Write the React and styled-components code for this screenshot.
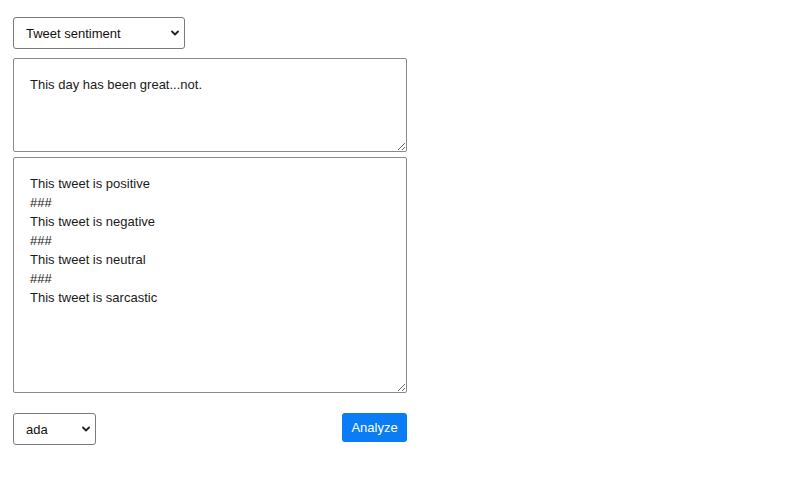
import React from "react";
import styled, { createGlobalStyle } from "styled-components";

const Global = createGlobalStyle`
  html, body { margin: 0; padding: 0; background: #fff; }
  body { font-family: "Liberation Sans", Arial, Helvetica, sans-serif; color: #111; }
`;

const Page = styled.div`
  padding: 17px 0 0 13px;
  width: 394px;
  display: flex;
  flex-direction: column;
`;

const SelectWrap = styled.div`
  position: relative;
  width: ${(p) => p.$width}px;
  height: 32px;
`;

const Select = styled.select`
  appearance: none;
  -webkit-appearance: none;
  box-sizing: border-box;
  width: 100%;
  height: 100%;
  margin: 0;
  padding: 0 24px 0 12px;
  border: 1px solid #7a7a7a;
  border-radius: 3px;
  background: #fff;
  font-family: "Liberation Sans", Arial, sans-serif;
  font-size: 13px;
  color: #111;
  outline: none;
`;

const Chevron = styled.svg`
  position: absolute;
  right: ${(p) => p.$right}px;
  top: 13px;
  width: 8px;
  height: 6px;
  pointer-events: none;
`;

const TextArea = styled.textarea`
  box-sizing: border-box;
  display: block;
  width: 394px;
  height: ${(p) => p.$height}px;
  margin: ${(p) => p.$mt}px 0 0 0;
  padding: 16px 16px;
  border: 1px solid #8a8a8a;
  border-radius: 2px;
  font-family: "Liberation Sans", Arial, sans-serif;
  font-size: 13px;
  line-height: 19px;
  color: #1a1a1a;
  resize: vertical;
  outline: none;
`;

const BottomRow = styled.div`
  display: flex;
  justify-content: space-between;
  align-items: flex-start;
  margin-top: 20px;
`;

const Button = styled.button`
  height: 29px;
  width: 65px;
  padding: 0;
  border: none;
  border-radius: 3px;
  background: #0a7cf6;
  color: #fff;
  font-family: "Liberation Sans", Arial, sans-serif;
  font-size: 13px;
`;

function ChevronIcon({ right }) {
  return (
    <Chevron $right={right} viewBox="0 0 8 6">
      <path d="M1 1.5 L4 4.5 L7 1.5" fill="none" stroke="#222" strokeWidth="1.8" strokeLinecap="round" strokeLinejoin="round" />
    </Chevron>
  );
}

export default function App() {
  return (
    <>
      <Global />
      <Page>
        <SelectWrap $width={172}>
          <Select defaultValue="tweet">
            <option value="tweet">Tweet sentiment</option>
          </Select>
          <ChevronIcon right={6} />
        </SelectWrap>
        <TextArea $height={94} $mt={9} defaultValue="This day has been great...not." />
        <TextArea
          $height={236}
          $mt={5}
          defaultValue={"This tweet is positive\n###\nThis tweet is negative\n###\nThis tweet is neutral\n###\nThis tweet is sarcastic"}
        />
        <BottomRow>
          <SelectWrap $width={83}>
            <Select defaultValue="ada">
              <option value="ada">ada</option>
            </Select>
            <ChevronIcon right={6} />
          </SelectWrap>
          <Button>Analyze</Button>
        </BottomRow>
      </Page>
    </>
  );
}
